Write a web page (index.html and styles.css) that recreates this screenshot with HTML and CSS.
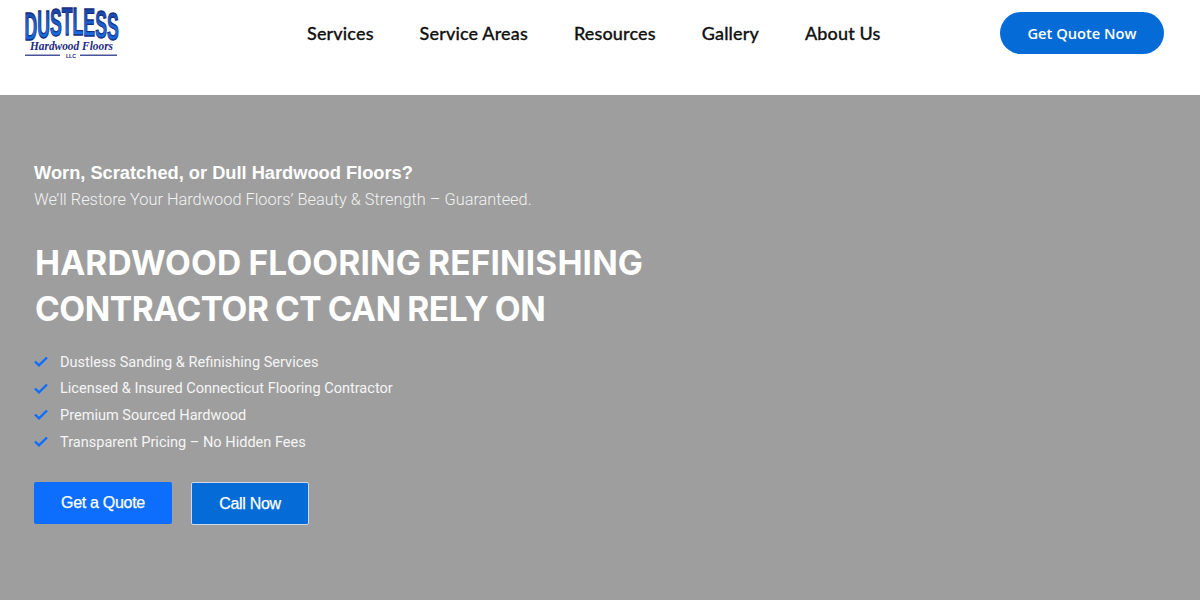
FILE: index.html
```html
<!DOCTYPE html>
<html lang="en">
<head>
<meta charset="utf-8">
<title>Dustless Hardwood Floors</title>
<link rel="stylesheet" href="styles.css">
</head>
<body>
<header class="header">
  <a class="logo" href="#" aria-label="Dustless Hardwood Floors LLC">
    <svg width="100" height="62" viewBox="0 0 100 62">
      <defs>
        <linearGradient id="lg" x1="0" y1="0" x2="0" y2="1">
          <stop offset="0" stop-color="#1a3288"/>
          <stop offset="0.65" stop-color="#1a6fe6"/>
          <stop offset="1" stop-color="#0b55cc"/>
        </linearGradient>
      </defs>
      <g transform="scale(.465 1)">
        <text class="logo-main" x="1" y="33 31 29 28 28 29 31 33">DUSTLESS</text>
      </g>
      <text class="logo-script" x="47.5" y="42.5" text-anchor="middle" textLength="83" lengthAdjust="spacingAndGlyphs">Hardwood Floors</text>
      <rect x="1" y="47.6" width="35" height="1.2" fill="#1c2a80"/>
      <rect x="56" y="47.6" width="37" height="1.2" fill="#1c2a80"/>
      <text class="logo-llc" x="47" y="51" text-anchor="middle">LLC</text>
    </svg>
  </a>
  <nav class="nav">
    <a href="#">Services</a>
    <a href="#">Service Areas</a>
    <a href="#">Resources</a>
    <a href="#">Gallery</a>
    <a href="#">About Us</a>
  </nav>
  <a class="cta" href="#">Get Quote Now</a>
</header>
<main class="hero">
  <p class="eyebrow">Worn, Scratched, or Dull Hardwood Floors?</p>
  <p class="sub">We’ll Restore Your Hardwood Floors’ Beauty &amp; Strength – Guaranteed.</p>
  <h1 class="title"><span class="line line-a">HARDWOOD FLOORING REFINISHING</span> <span class="line line-b">CONTRACTOR CT CAN RELY ON</span></h1>
  <ul class="checks">
    <li><svg class="tick" width="14" height="11" viewBox="0 0 14 11"><path d="M1 5.5 5 9.3 13 1.5" fill="none" stroke="#0d6efd" stroke-width="2.4"/></svg>Dustless Sanding &amp; Refinishing Services</li>
    <li><svg class="tick" width="14" height="11" viewBox="0 0 14 11"><path d="M1 5.5 5 9.3 13 1.5" fill="none" stroke="#0d6efd" stroke-width="2.4"/></svg>Licensed &amp; Insured Connecticut Flooring Contractor</li>
    <li><svg class="tick" width="14" height="11" viewBox="0 0 14 11"><path d="M1 5.5 5 9.3 13 1.5" fill="none" stroke="#0d6efd" stroke-width="2.4"/></svg>Premium Sourced Hardwood</li>
    <li><svg class="tick" width="14" height="11" viewBox="0 0 14 11"><path d="M1 5.5 5 9.3 13 1.5" fill="none" stroke="#0d6efd" stroke-width="2.4"/></svg>Transparent Pricing – No Hidden Fees</li>
  </ul>
  <div class="actions">
    <a class="btn btn-primary" href="#">Get a Quote</a>
    <a class="btn btn-outline" href="#">Call Now</a>
  </div>
</main>
</body>
</html>
```
FILE: styles.css
```css
* { box-sizing: border-box; }
html, body { margin: 0; height: 100%; overflow: hidden; }
body { background: #fff; font-family: "Liberation Sans", Arial, sans-serif; }
a { text-decoration: none; }

.header {
  height: 95px;
  display: flex;
  align-items: flex-start;
  padding: 7px 36px 0 24px;
  background: #fff;
}
.logo { display: block; width: 96px; height: 60px; flex: none; }
.logo svg { display: block; overflow: visible; }
.logo-main { font: 700 38px "Liberation Sans", sans-serif; fill: url(#lg); stroke: #16307f; stroke-width: 1.3px; }
.logo-script { font: italic 700 11.5px "Liberation Serif", serif; fill: #1c2a80; }
.logo-llc { font: 700 5.2px "Liberation Sans", sans-serif; fill: #1c2a80; }

.nav {
  display: flex;
  gap: 46px;
  margin-left: 187px;
  padding-top: 15px;
}
.nav a {
  font: 500 18px/22px Lato, sans-serif;
  letter-spacing: .15px;
  -webkit-text-stroke: .3px #111;
  color: #111;
}
.cta {
  margin-left: auto;
  margin-top: 5px;
  width: 164px;
  height: 42px;
  border-radius: 21px;
  background: #056bd6;
  color: #fff;
  font: 600 14.7px/42px "Open Sans", sans-serif;
  text-align: center;
}

.hero {
  height: 505px;
  background: #9e9e9e;
  padding: 67px 34px 0;
  color: #fff;
}
.eyebrow { margin: 0; font: 700 18.25px/22px "Liberation Sans", sans-serif; }
.sub { margin: 5px 0 0; font: 300 16.36px/22px Roboto, sans-serif; color: #f2f2f2; }
.title {
  margin: 29px 0 0 1px;
  font: 700 33.5px/46px Inter, "Liberation Sans", sans-serif;
  word-spacing: -1px;
}
.line { display: block; }
.line-a { letter-spacing: .15px; }
.line-b { letter-spacing: -.45px; }
.checks { list-style: none; margin: 17.5px 0 0; padding: 0; }
.checks li {
  display: flex;
  align-items: center;
  height: 26.6px;
  font: 400 14.55px/20px Roboto, sans-serif;
  color: #f5f5f5;
}
.tick { margin: -2px 12px 0 0; flex: none; }
.actions { display: flex; gap: 19px; margin-top: 26.5px; align-items: flex-start; }
.btn {
  display: block;
  height: 42px;
  border-radius: 2px;
  color: #fff;
  font: 400 16px/42px "Liberation Sans", sans-serif;
  letter-spacing: -.3px;
  -webkit-text-stroke: .25px #fff;
  text-align: center;
}
.btn-primary { width: 138px; background: #0d6efd; }
.btn-outline { width: 118px; height: 43px; background: #056bd6; border: 1px solid #cfd8e6; line-height: 41px; }
```
